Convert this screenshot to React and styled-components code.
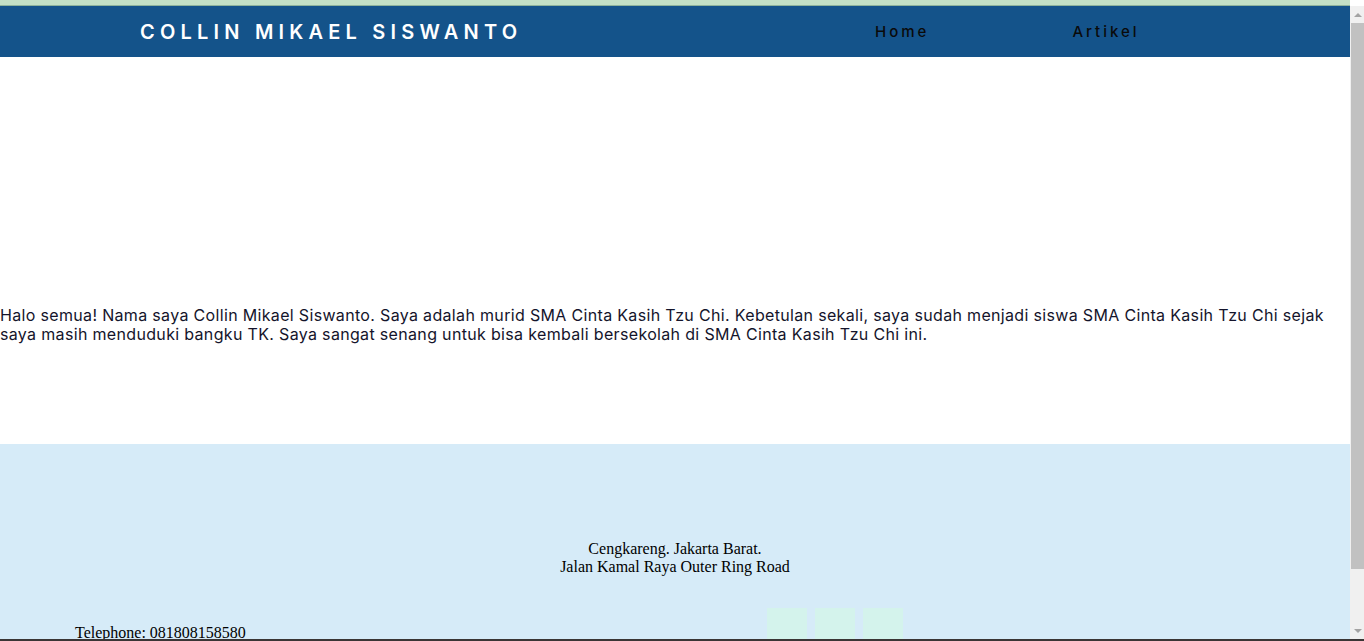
import React from "react";
import styled, { createGlobalStyle } from "styled-components";

const GlobalStyle = createGlobalStyle`
  body {
    margin: 0 14px 0 0;
    font-family: "Liberation Serif", "Times New Roman", serif;
    background: #ffffff;
  }
`;

const TopStrip = styled.div`
  height: 5px;
  background: #c4e0c6;
  border-bottom: 1px solid #8fb39c;
  margin-right: -14px;
`;

const Header = styled.header`
  height: 51px;
  background: #14538a;
  display: flex;
  align-items: center;
  padding-left: 140px;
`;

const Brand = styled.div`
  font-family: Inter, "Noto Sans", sans-serif;
  font-size: 20px;
  font-weight: 600;
  letter-spacing: 5.2px;
  color: #ffffff;
  width: 735px;
`;

const Nav = styled.nav`
  display: flex;
  gap: 143px;
`;

const NavLink = styled.a`
  font-family: Inter, "Noto Sans", sans-serif;
  font-size: 15px;
  font-weight: 500;
  letter-spacing: 3px;
  color: #0a0a0a;
  text-decoration: none;
`;

const Main = styled.main`
  height: 387px;
  box-sizing: border-box;
  padding-top: 249px;
`;

const Intro = styled.p`
  margin: 0;
  font-family: Inter, "Noto Sans", sans-serif;
  font-size: 16px;
  line-height: 19px;
  letter-spacing: 0.33px;
  color: #14142b;
`;

const Footer = styled.footer`
  background: #d6ebf8;
  height: 300px;
  display: flex;
  flex-direction: column;
  padding-top: 96px;
  box-sizing: border-box;
`;

const Address = styled.div`
  text-align: center;
  font-size: 16px;
  line-height: 18px;
  color: #000;
`;

const ContactRow = styled.div`
  display: flex;
  align-items: flex-start;
  margin-top: 32px;
  padding-left: 75px;
`;

const Phone = styled.div`
  font-size: 16px;
  line-height: 18px;
  margin-top: 16px;
  width: 692px;
  color: #000;
`;

const Socials = styled.div`
  display: flex;
  gap: 8px;
`;

const SocialBox = styled.a`
  display: block;
  width: 40px;
  height: 40px;
  background: #d4f3ec;
`;

const ScrollTrack = styled.div`
  position: fixed;
  top: 6px;
  right: 0;
  bottom: 2px;
  width: 14px;
  background: #f0f0f0;
  display: flex;
  flex-direction: column;
  align-items: center;
  padding: 0 0 0 1px;
  box-sizing: border-box;
`;

const ScrollArrow = styled.div`
  height: 17px;
  display: flex;
  align-items: center;
  justify-content: center;
  &::before {
    content: "";
    border-left: 4px solid transparent;
    border-right: 4px solid transparent;
    ${({ $down }) =>
      $down ? "border-top: 4px solid #a3a3a3;" : "border-bottom: 4px solid #a3a3a3;"}
  }
`;

const ScrollThumb = styled.div`
  width: 13px;
  height: 546px;
  background: #c1c1c1;
`;

const ScrollRest = styled.div`
  flex: 1;
`;

const BottomEdge = styled.div`
  position: fixed;
  left: 0;
  right: 0;
  bottom: 0;
  height: 2px;
  background: #3a3535;
`;

export default function App() {
  return (
    <>
      <GlobalStyle />
      <TopStrip />
      <Header>
        <Brand>COLLIN MIKAEL SISWANTO</Brand>
        <Nav>
          <NavLink href="#">Home</NavLink>
          <NavLink href="#">Artikel</NavLink>
        </Nav>
      </Header>
      <Main>
        <Intro>
          Halo semua! Nama saya Collin Mikael Siswanto. Saya adalah murid SMA
          Cinta Kasih Tzu Chi. Kebetulan sekali, saya sudah menjadi siswa SMA
          Cinta Kasih Tzu Chi sejak saya masih menduduki bangku TK. Saya sangat
          senang untuk bisa kembali bersekolah di SMA Cinta Kasih Tzu Chi ini.
        </Intro>
      </Main>
      <Footer>
        <Address>
          Cengkareng. Jakarta Barat.
          <br />
          Jalan Kamal Raya Outer Ring Road
        </Address>
        <ContactRow>
          <Phone>Telephone: 081808158580</Phone>
          <Socials>
            <SocialBox href="#" />
            <SocialBox href="#" />
            <SocialBox href="#" />
          </Socials>
        </ContactRow>
      </Footer>
      <ScrollTrack>
        <ScrollArrow />
        <ScrollThumb />
        <ScrollRest />
        <ScrollArrow $down />
      </ScrollTrack>
      <BottomEdge />
    </>
  );
}
